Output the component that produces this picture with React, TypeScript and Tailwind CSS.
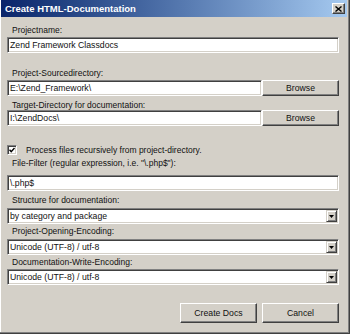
const font = { fontFamily: '"Liberation Sans", Arial, sans-serif' };

const Label = ({ text, className }: { text: string; className: string }) => (
  <div className={`h-[10px] pl-[5px] text-[8.5px] leading-[10px] text-[#111] ${className}`}>
    {text}
  </div>
);

const TextBox = ({ value, className = '' }: { value: string; className?: string }) => (
  <div
    className={`flex h-[16px] items-center border border-t-[#808080] border-l-[#808080] border-b-white border-r-white bg-white pl-[2px] text-[8.7px] leading-[10px] text-[#111] shadow-[inset_1px_1px_0_#404040,inset_-1px_-1px_0_#d4d0c8] ${className}`}
  >
    {value}
  </div>
);

const Button = ({ text, className = '' }: { text: string; className?: string }) => (
  <div
    className={`flex w-[77px] items-center justify-center border border-t-white border-l-white border-b-[#404040] border-r-[#404040] bg-[#d4d0c8] text-[8.7px] leading-[10px] text-[#111] shadow-[inset_-1px_-1px_0_#808080] ${className}`}
  >
    {text}
  </div>
);

const Select = ({ value, className = '' }: { value: string; className?: string }) => (
  <div
    className={`flex h-[16px] items-center border border-t-[#808080] border-l-[#808080] border-b-white border-r-white bg-white pl-[2px] pr-[1px] text-[8.7px] leading-[10px] text-[#111] shadow-[inset_1px_1px_0_#404040,inset_-1px_-1px_0_#d4d0c8] ${className}`}
  >
    <span className="flex-1">{value}</span>
    <div className="flex h-[12px] w-[11px] items-center justify-center border border-t-[#d4d0c8] border-l-[#d4d0c8] border-b-[#404040] border-r-[#404040] bg-[#d4d0c8] shadow-[inset_1px_1px_0_#ffffff,inset_-1px_-1px_0_#808080]">
      <svg width="5" height="3" viewBox="0 0 5 3">
        <path d="M0 0h5L2.5 3z" fill="#000" />
      </svg>
    </div>
  </div>
);

const App = () => {
  return (
    <div
      className="flex h-[334px] w-[350px] flex-col bg-[#d4d0c8] pb-[3px] pl-[1px] pr-[3px] shadow-[inset_-1px_-1px_0_#404040,inset_-2px_-2px_0_#808080,inset_1px_0_0_#ffffff]"
      style={font}
    >
      <div className="flex h-[17px] items-center justify-between bg-linear-to-r from-[#0a246a] to-[#a6caf0] pl-[4px] pr-[2px]">
        <span className="text-[9.5px] font-bold leading-[12px] text-white">Create HTML-Documentation</span>
        <div className="flex h-[11px] w-[13px] items-center justify-center border border-t-white border-l-white border-b-[#404040] border-r-[#404040] bg-[#d4d0c8] shadow-[inset_-1px_-1px_0_#808080]">
          <svg width="7" height="6" viewBox="0 0 7 6">
            <path d="M0.5 0.5l6 5M6.5 0.5l-6 5" stroke="#000" strokeWidth="1.4" />
          </svg>
        </div>
      </div>

      <div className="flex flex-col pl-[6px] pr-[8px]">
        <Label text="Projectname:" className="mt-[8px]" />
        <TextBox value="Zend Framework Classdocs" className="mt-[2px]" />

        <Label text="Project-Sourcedirectory:" className="mt-[15px]" />
        <div className="mt-[2px] flex">
          <TextBox value="E:\Zend_Framework\" className="flex-1" />
          <Button text="Browse" className="h-[16px]" />
        </div>

        <Label text="Target-Directory for documentation:" className="mt-[4px]" />
        <div className="flex">
          <TextBox value="I:\ZendDocs\" className="flex-1" />
          <Button text="Browse" className="h-[16px]" />
        </div>

        <div className="mt-[19px] flex h-[10px] items-center">
          <div className="flex h-[10px] w-[10px] items-center justify-center border border-t-[#808080] border-l-[#808080] border-b-white border-r-white bg-white shadow-[inset_1px_1px_0_#404040,inset_-1px_-1px_0_#d4d0c8]">
            <svg width="6" height="6" viewBox="0 0 6 6">
              <path d="M0.5 2.8l1.7 1.8L5.5 1" stroke="#000" strokeWidth="1.4" fill="none" />
            </svg>
          </div>
          <span className="ml-[9px] text-[8.5px] leading-[10px] text-[#111]">
            Process files recursively from project-directory.
          </span>
        </div>

        <Label text={'File-Filter (regular expression, i.e. "\\.php$"):'} className="mt-[3px]" />
        <TextBox value="\.php$" className="mt-[7px]" />

        <Label text="Structure for documentation:" className="mt-[4px]" />
        <Select value="by category and package" className="mt-[3px]" />

        <Label text="Project-Opening-Encoding:" className="mt-[2px]" />
        <Select value="Unicode (UTF-8) / utf-8" className="mt-[3px]" />

        <Label text="Documentation-Write-Encoding:" className="mt-[2px]" />
        <Select value="Unicode (UTF-8) / utf-8" className="mt-[2px]" />

        <div className="mt-[18px] flex justify-end gap-[5px]">
          <Button text="Create Docs" className="h-[20px]" />
          <Button text="Cancel" className="h-[20px]" />
        </div>
      </div>
    </div>
  );
};

export default App;
